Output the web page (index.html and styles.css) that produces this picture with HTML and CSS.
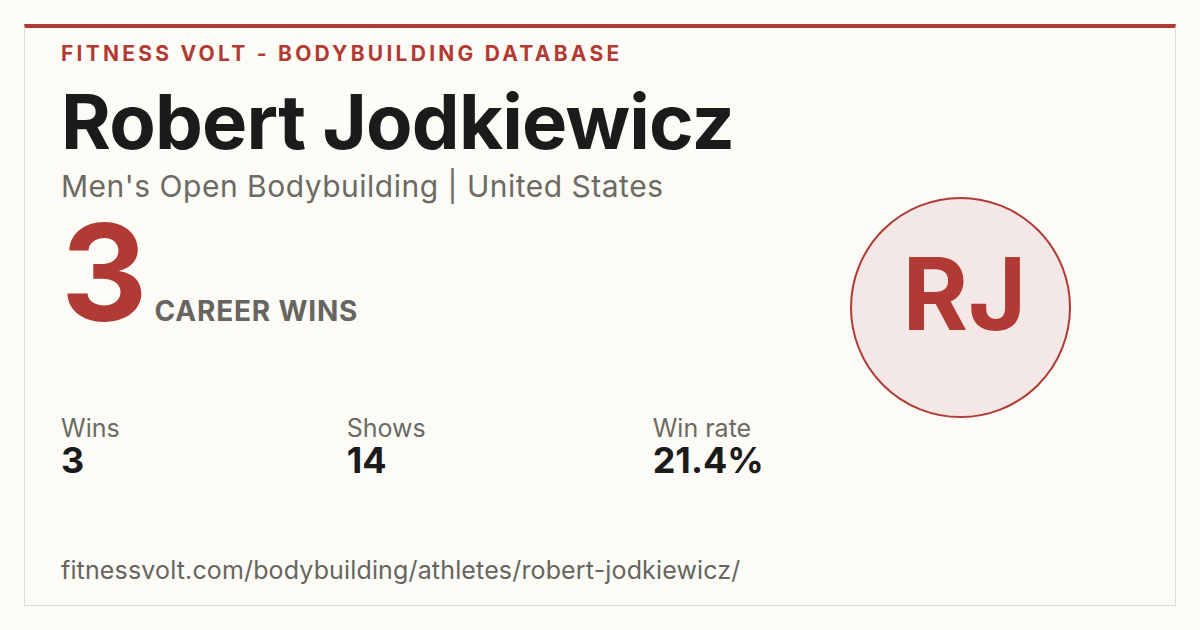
FILE: index.html
```html
<!DOCTYPE html>
<html lang="en">
<head>
<meta charset="utf-8">
<title>Robert Jodkiewicz - Fitness Volt</title>
<link rel="stylesheet" href="styles.css">
</head>
<body>
<div class="card">
  <div class="main">
    <div class="brand">FITNESS VOLT - BODYBUILDING DATABASE</div>
    <h1 class="name">Robert Jodkiewicz</h1>
    <div class="sub">Men's Open Bodybuilding | United States</div>
    <div class="hero">
      <span class="hero-num">3</span>
      <span class="hero-label">CAREER WINS</span>
    </div>
    <div class="stats">
      <div class="stat">
        <div class="stat-label">Wins</div>
        <div class="stat-value">3</div>
      </div>
      <div class="stat">
        <div class="stat-label">Shows</div>
        <div class="stat-value">14</div>
      </div>
      <div class="stat">
        <div class="stat-label">Win rate</div>
        <div class="stat-value">21.4%</div>
      </div>
    </div>
    <div class="url">fitnessvolt.com/bodybuilding/athletes/robert-jodkiewicz/</div>
  </div>
  <div class="aside">
    <div class="avatar">RJ</div>
  </div>
</div>
</body>
</html>
```
FILE: styles.css
```css
html, body {
  margin: 0;
  padding: 0;
}
body {
  background: #fcfbf6;
  font-family: Inter, "Liberation Sans", sans-serif;
  width: 1200px;
  height: 630px;
  overflow: hidden;
}
.card {
  box-sizing: border-box;
  margin: 24px;
  width: 1152px;
  height: 582px;
  border: 1px solid #dedbd3;
  border-top: 4px solid #b23a35;
  display: flex;
  padding: 14px 36px 20px 36px;
}
.main {
  flex: 1;
  display: flex;
  flex-direction: column;
}
.brand {
  color: #b23a35;
  font-weight: 700;
  font-size: 21px;
  line-height: 24px;
  letter-spacing: 3.25px;
}
.name {
  margin: 10px 0 0 0;
  font-size: 76px;
  line-height: 90px;
  font-weight: 700;
  color: #1b1b1b;
  letter-spacing: -0.8px;
}
.sub {
  margin-top: 2px;
  font-size: 30px;
  line-height: 36px;
  letter-spacing: 0.5px;
  color: #6b6a64;
}
.hero {
  display: flex;
  align-items: baseline;
  margin-top: 8px;
}
.hero-num {
  font-size: 134px;
  line-height: 120px;
  font-weight: 700;
  color: #b23a35;
  letter-spacing: -2px;
}
.hero-label {
  margin-left: 9px;
  font-size: 28px;
  font-weight: 700;
  letter-spacing: 0.8px;
  color: #666560;
}
.stats {
  display: flex;
  gap: 227px;
  margin-top: 82px;
}
.stat-label {
  font-size: 25px;
  line-height: 28px;
  color: #6b6a64;
}
.stat-value {
  font-size: 36px;
  line-height: 36px;
  font-weight: 700;
  color: #1b1b1b;
}
.url {
  margin-top: auto;
  font-size: 25px;
  line-height: 30px;
  letter-spacing: 0.15px;
  color: #66655f;
}
.aside {
  display: flex;
  align-items: flex-start;
  padding-top: 155px;
  padding-right: 68px;
}
.avatar {
  box-sizing: border-box;
  width: 221px;
  height: 221px;
  border-radius: 50%;
  border: 2px solid #b23a35;
  background: #f4e8e6;
  color: #b23a35;
  font-weight: 700;
  font-size: 100px;
  padding-bottom: 28px;
  padding-left: 8px;
  display: flex;
  align-items: center;
  justify-content: center;
}
```
